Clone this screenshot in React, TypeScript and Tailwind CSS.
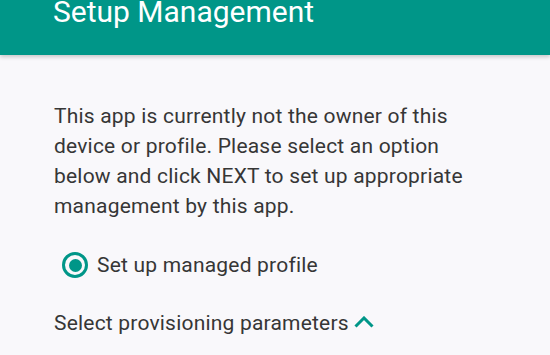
export default function App() {
  return (
    <div
      className="w-[550px] h-[355px] overflow-hidden bg-[#f9f8fb] text-[#333333]"
      style={{ fontFamily: 'Roboto, "Noto Sans", sans-serif' }}
    >
      {/* App bar */}
      <div className="relative z-10 flex h-[55px] flex-col overflow-hidden bg-[#009688] shadow-[0_2px_4px_rgba(0,0,0,0.2)]">
        <h1 className="pl-[53px] -mt-[3px] text-[30px] leading-[30px] text-white font-normal">
          Setup Management
        </h1>
      </div>

      {/* Content */}
      <div className="pl-[54px] pr-[72px] pt-[46px]">
        <p className="text-[21px] leading-[30px] tracking-[0.2px] text-[#363636]">
          This app is currently not the owner of this device or profile. Please select an option below and click NEXT
          to set up appropriate management by this app.
        </p>

        <label className="mt-[29px] ml-[8px] flex items-center gap-[9px]">
          <span className="flex h-[26px] w-[26px] items-center justify-center rounded-full border-[3px] border-[#009688]">
            <span className="h-[13px] w-[13px] rounded-full bg-[#009688]" />
          </span>
          <span className="text-[21px] leading-[30px] tracking-[0.2px] text-[#363636]">Set up managed profile</span>
        </label>

        <div className="mt-[28px] flex items-center gap-[5px]">
          <span className="text-[21px] leading-[30px] tracking-[0.2px] text-[#363636]">
            Select provisioning parameters
          </span>
          <svg width="20" height="12" viewBox="0 0 20 12" className="-mt-[2px]">
            <path d="M1.5 10.5 L10 2 L18.5 10.5" fill="none" stroke="#009688" strokeWidth="3" />
          </svg>
        </div>
      </div>
    </div>
  );
}
